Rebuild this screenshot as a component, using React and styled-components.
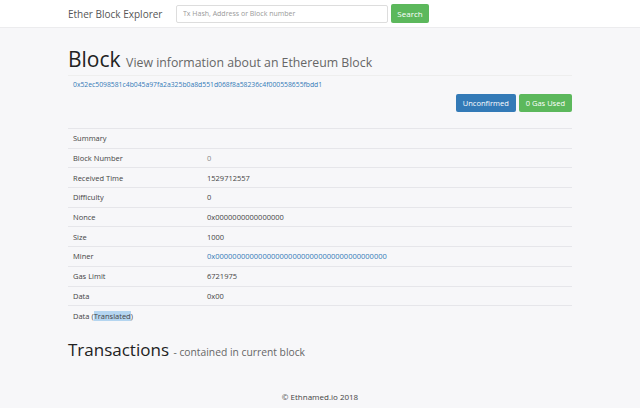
import styled, { createGlobalStyle } from 'styled-components';

const GlobalStyle = createGlobalStyle`
  html, body {
    margin: 0;
    padding: 0;
    background: #f7f7f9;
    font-family: "Open Sans", "Liberation Sans", sans-serif;
    color: #333;
  }
  * { box-sizing: border-box; }
`;

const rows = [
  { label: 'Summary', value: '' },
  { label: 'Block Number', value: '0', muted: true },
  { label: 'Received Time', value: '1529712557' },
  { label: 'Difficulty', value: '0' },
  { label: 'Nonce', value: '0x0000000000000000' },
  { label: 'Size', value: '1000' },
  { label: 'Miner', value: '0x0000000000000000000000000000000000000000', link: true },
  { label: 'Gas Limit', value: '6721975' },
  { label: 'Data', value: '0x00' },
];

const App = () => {
  return (
    <Page>
      <GlobalStyle />
      <Navbar>
        <Brand>Ether Block Explorer</Brand>
        <SearchInput placeholder="Tx Hash, Address or Block number" />
        <SearchButton>Search</SearchButton>
      </Navbar>
      <Container>
        <Heading>
          Block <Sub>View information about an Ethereum Block</Sub>
        </Heading>
        <Hash>0x52ec5098581c4b045a97fa2a325b0a8d551d068f8a58236c4f000558655fbdd1</Hash>
        <Badges>
          <Badge $color="#337ab7">Unconfirmed</Badge>
          <Badge $color="#5cb85c">0 Gas Used</Badge>
        </Badges>
        <Table>
          <tbody>
            {rows.map((r) => (
              <Row key={r.label}>
                <Label>{r.label}</Label>
                <Value $muted={r.muted} $link={r.link}>{r.value}</Value>
              </Row>
            ))}
            <Row>
              <Label>
                Data (<Selected>Translated</Selected>)
              </Label>
              <Value />
            </Row>
          </tbody>
        </Table>
        <TxHeading>
          Transactions <TxSub>- contained in current block</TxSub>
        </TxHeading>
      </Container>
      <Footer>© Ethnamed.io 2018</Footer>
    </Page>
  );
};

export default App;

const Page = styled.div`
  width: 640px;
  height: 408px;
  overflow: hidden;
  background: #f7f7f9;
`;
const Navbar = styled.header`
  height: 28px;
  background: #fff;
  border-bottom: 1px solid #ececee;
  display: flex;
  align-items: center;
  padding-left: 68px;
`;
const Brand = styled.div`
  font-size: 10px;
  color: #555;
  width: 108px;
`;
const SearchInput = styled.input`
  width: 212px;
  height: 18px;
  border: 1px solid #ddd;
  border-radius: 2px;
  padding: 0 6px;
  font-family: inherit;
  font-size: 7px;
  color: #555;
  &::placeholder { color: #999; }
`;
const SearchButton = styled.button`
  margin-left: 3px;
  height: 19px;
  width: 38px;
  border: none;
  border-radius: 2px;
  background: #5cb85c;
  color: #fff;
  font-family: inherit;
  font-size: 8px;
  padding: 0;
`;
const Container = styled.main`
  padding: 0 68px;
`;
const Heading = styled.h1`
  margin: 19px 0 0;
  font-size: 21px;
  font-weight: 400;
  line-height: 24px;
  color: #222;
  padding-bottom: 0;
  border-bottom: 1px solid #eee;
`;
const Sub = styled.small`
  font-size: 12.3px;
  color: #666;
`;
const Hash = styled.div`
  margin: 4px 0 0 5px;
  font-size: 6.8px;
  color: #337ab7;
  line-height: 10px;
`;
const Badges = styled.div`
  display: flex;
  justify-content: flex-end;
  gap: 3px;
  margin-top: 4px;
`;
const Badge = styled.span`
  background: ${(p) => p.$color};
  color: #fff;
  font-size: 7.5px;
  height: 18px;
  padding: 0 7px;
  border-radius: 2px;
  display: flex;
  align-items: center;
`;
const Table = styled.table`
  width: 100%;
  margin-top: 16px;
  border-collapse: collapse;
  font-size: 7.5px;
`;
const Row = styled.tr`
  height: 19.7px;
  border-top: 1px solid #e6e6ea;
`;
const Label = styled.td`
  width: 139px;
  padding: 0 0 0 5px;
  color: #444;
`;
const Value = styled.td`
  padding: 0;
  color: ${(p) => (p.$link ? '#337ab7' : p.$muted ? '#888' : '#444')};
`;
const Selected = styled.span`
  background: #b4d5f0;
`;
const TxHeading = styled.h2`
  margin: 13px 0 0;
  font-size: 17px;
  font-weight: 400;
  color: #222;
  line-height: 24px;
`;
const TxSub = styled.small`
  font-size: 10.3px;
  color: #666;
`;
const Footer = styled.footer`
  text-align: center;
  font-size: 8px;
  color: #444;
  margin-top: 27px;
`;
